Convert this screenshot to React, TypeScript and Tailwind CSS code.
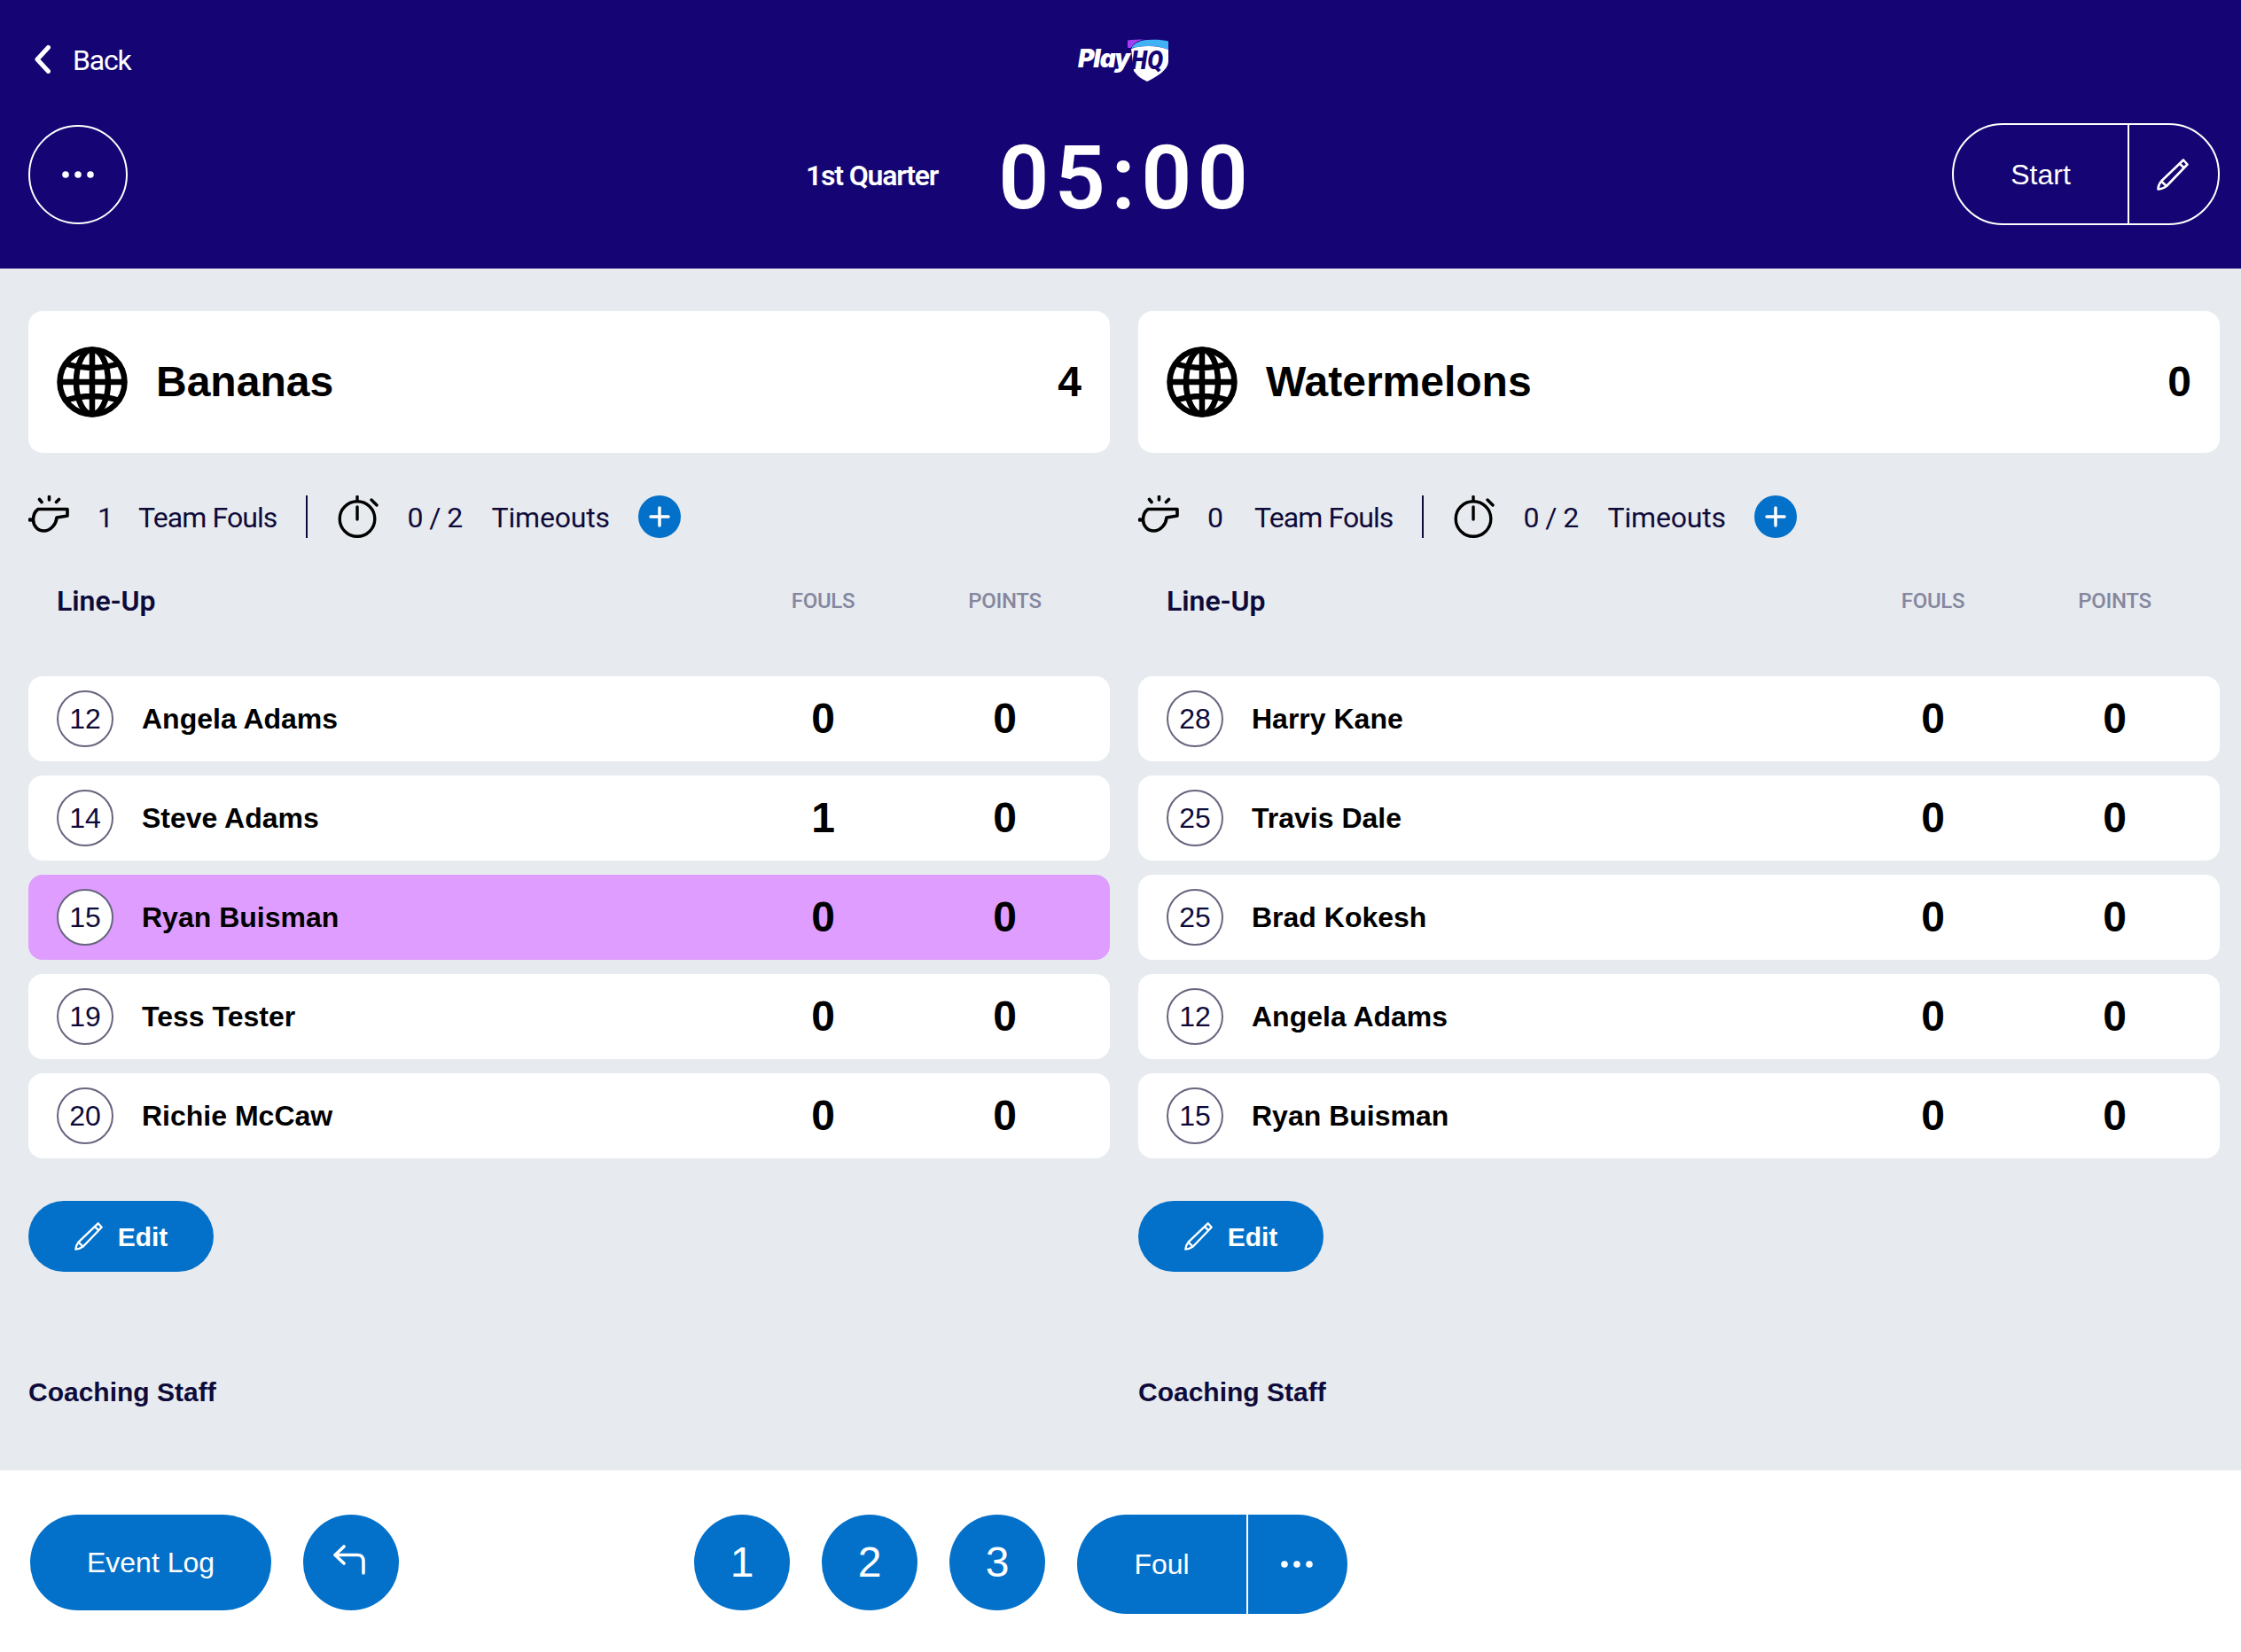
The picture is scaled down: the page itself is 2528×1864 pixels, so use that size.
const BLUE = "bg-[#0371c9]";

const bananas = [
  { no: 12, name: "Angela Adams", fouls: 0, points: 0 },
  { no: 14, name: "Steve Adams", fouls: 1, points: 0 },
  { no: 15, name: "Ryan Buisman", fouls: 0, points: 0, active: true },
  { no: 19, name: "Tess Tester", fouls: 0, points: 0 },
  { no: 20, name: "Richie McCaw", fouls: 0, points: 0 },
];

const watermelons = [
  { no: 28, name: "Harry Kane", fouls: 0, points: 0 },
  { no: 25, name: "Travis Dale", fouls: 0, points: 0 },
  { no: 25, name: "Brad Kokesh", fouls: 0, points: 0 },
  { no: 12, name: "Angela Adams", fouls: 0, points: 0 },
  { no: 15, name: "Ryan Buisman", fouls: 0, points: 0 },
];

const Pencil = ({ className }: { className: string }) => (
  <svg viewBox="0 0 36 36" fill="none" stroke="white" strokeWidth="2.6" strokeLinejoin="round" className={className}>
    <path d="M30 1.5L34.5 6.5L11 31C8 33 5 34.5 1.5 34.5C1.5 31 3 28 5 25.5Z" />
    <path d="M26 6L31 10.5M5 25.5L11 31" />
  </svg>
);

const Dots = () => (
  <svg viewBox="0 0 36 8" fill="white" className="w-9 h-2">
    <circle cx="4" cy="4" r="3.8" />
    <circle cx="18" cy="4" r="3.8" />
    <circle cx="32" cy="4" r="3.8" />
  </svg>
);

const Globe = () => (
  <svg viewBox="0 0 80 80" fill="none" stroke="black" strokeWidth="6.5" className="w-20 h-20 shrink-0">
    <circle cx="40" cy="40" r="36.5" />
    <ellipse cx="40" cy="40" rx="18" ry="36.5" />
    <path d="M40 2V78M2 40H78M9 19Q40 29 71 19M9 61Q40 51 71 61" />
  </svg>
);

const Whistle = () => (
  <svg viewBox="0 0 46 42" fill="none" stroke="black" strokeWidth="3.6" strokeLinecap="round" strokeLinejoin="round" className="w-[46px] h-[42px] shrink-0 -mt-1.5">
    <path d="M11 15.5H44V23L32 25C31.5 32 25.5 40 17.5 40C10.5 40 5.5 34 5.5 27.5C5.5 22.5 7.5 18 11 15.5Z" />
    <path d="M12.5 4.5L15 7.5M23.5 1.5V5M34.5 4.5L31.5 7.5" />
    <path d="M1.8 27.5H3" strokeWidth="4.5" />
  </svg>
);

const Stopwatch = () => (
  <svg viewBox="0 0 46 48" fill="none" stroke="black" strokeWidth="3.4" strokeLinecap="round" className="w-[46px] h-12 shrink-0">
    <circle cx="22" cy="26.5" r="19.8" />
    <path d="M22 1.5V6M22 13V27M38 5L44 11" />
  </svg>
);

const PlusButton = () => (
  <button className={`w-12 h-12 rounded-full ${BLUE} flex items-center justify-center shrink-0`}>
    <svg viewBox="0 0 24 24" fill="none" stroke="white" strokeWidth="3.5" strokeLinecap="round" className="w-6 h-6">
      <path d="M12 2V22M2 12H22" />
    </svg>
  </button>
);

const Logo = () => (
  <div className="flex items-start justify-center h-12 w-[110px]">
    <span className="font-[Inter] italic font-black text-[28px] leading-none text-white tracking-[-1px] mt-2 -mr-1">Play</span>
    <svg viewBox="0 0 50 50" className="w-[50px] h-[50px] shrink-0 -mt-px">
      <path d="M2 2.5C8 1.5 14 1.5 20 1.5C13 3 9 6 6 11L2 11Z" fill="#a33ff0" />
      <path d="M7 10C11 4.5 18 2 26 2C34 1.5 42 2 48 3.5V13C38 8.5 24 7.5 7 11Z" fill="#41b2f6" />
      <path d="M6 12C20 7.5 36 8.5 48 13V27C47 36 36 43 24 49C18 46 13 43 9 37Z" fill="white" />
      <text x="6" y="35" fontFamily="Roboto" fontStyle="italic" fontWeight="900" fontSize="29" textLength="36" lengthAdjust="spacingAndGlyphs" fill="#150473">HQ</text>
    </svg>
  </div>
);

const Header = () => (
  <header className="h-[303px] bg-[#150473] pl-8 pr-6 shrink-0 flex flex-col text-white">
    <div className="grid grid-cols-[1fr_auto_1fr] items-center h-12 mt-11">
      <div className="flex items-center pl-[7px]">
        <svg viewBox="0 0 18 32" fill="none" stroke="white" strokeWidth="5" strokeLinecap="round" strokeLinejoin="round" className="w-[18px] h-8 -mt-0.5">
          <path d="M15.5 2.5L3 16L15.5 29.5" />
        </svg>
        <span className="font-[Roboto] text-[32px] leading-none tracking-[-1.2px] ml-[25px]">Back</span>
      </div>
      <Logo />
      <div />
    </div>
    <div className="flex items-center mt-[47px]">
      <button className="w-28 h-28 rounded-full border-2 border-white flex items-center justify-center shrink-0">
        <Dots />
      </button>
      <div className="flex items-center ml-[765px]">
        <span className="font-[Roboto] font-semibold text-[32px] leading-none tracking-[-1.2px] mt-0.5">1st Quarter</span>
        <span className="font-[Roboto] font-semibold text-[100px] leading-none tracking-[6.5px] ml-[68px] mt-2">05:00</span>
      </div>
      <div className="ml-auto flex h-[115px] w-[302px] rounded-full border-2 border-white">
        <button className="w-[198px] border-r-2 border-white font-['Liberation_Sans'] text-[32px]">Start</button>
        <button className="flex-1 flex items-center justify-center pr-0.5">
          <Pencil className="w-9 h-9" />
        </button>
      </div>
    </div>
  </header>
);

type Player = { no: number; name: string; fouls: number; points: number; active?: boolean };

const PlayerRow = ({ player }: { player: Player }) => (
  <div className={`h-24 rounded-2xl flex items-center pl-8 pr-4 font-['Liberation_Sans'] text-black ${player.active ? "bg-[#df9dff]" : "bg-white"}`}>
    <div className="w-16 h-16 rounded-full border-2 border-[#66657f] flex items-center justify-center text-[32px] text-[#0e0b3a] bg-white shrink-0">
      {player.no}
    </div>
    <div className="ml-8 flex-1 font-bold text-[32px]">{player.name}</div>
    <div className="w-[205px] text-center font-bold text-[48px]">{player.fouls}</div>
    <div className="w-[205px] text-center font-bold text-[48px]">{player.points}</div>
  </div>
);

const TeamColumn = ({ name, score, fouls, players }: { name: string; score: number; fouls: number; players: Player[] }) => (
  <section className="flex flex-col">
    <div className="h-40 bg-white rounded-2xl flex items-center px-8 font-['Liberation_Sans'] font-bold text-[48px] text-black">
      <Globe />
      <h2 className="ml-8 flex-1">{name}</h2>
      <span>{score}</span>
    </div>

    <div className="flex items-center h-12 mt-12 font-[Roboto] text-[32px] text-[#0e0b3a] tracking-[-0.6px]">
      <Whistle />
      <span className={`ml-8 mt-0.5 ${fouls === 1 ? "w-[46px]" : "w-[53px]"}`}>{fouls}</span>
      <span className="mt-0.5 tracking-[-0.9px]">Team Fouls</span>
      <span className="ml-[33px] w-0.5 h-12 bg-[#0e0b3a]" />
      <span className="ml-[34px] flex"><Stopwatch /></span>
      <span className="ml-8 mt-0.5">0 / 2</span>
      <span className="ml-[33px] mt-0.5 tracking-[-0.2px]">Timeouts</span>
      <span className="ml-8 flex"><PlusButton /></span>
    </div>

    <div className="flex items-center h-12 mt-[47px] pl-8 pr-4">
      <span className="flex-1 font-[Roboto] font-semibold text-[32px] text-[#0e0b3a]">Line-Up</span>
      <span className="w-[205px] text-center font-[Roboto] font-medium text-2xl text-[#85879f] tracking-[-0.3px]">FOULS</span>
      <span className="w-[205px] text-center font-[Roboto] font-medium text-2xl text-[#85879f] tracking-[-0.3px]">POINTS</span>
    </div>

    <div className="flex flex-col gap-4 mt-[61px]">
      {players.map((p) => (
        <PlayerRow key={p.name} player={p} />
      ))}
    </div>

    <button className={`mt-12 h-20 w-[209px] rounded-full ${BLUE} flex items-center justify-center gap-[17px] text-white`}>
      <Pencil className="w-8 h-8" />
      <span className="font-['Liberation_Sans'] font-bold text-[30px]">Edit</span>
    </button>

    <div className="mt-[115px] h-10 flex items-center font-['Liberation_Sans'] font-bold text-[30px] text-[#0e0b3a]">Coaching Staff</div>
  </section>
);

const Footer = () => (
  <footer className="flex-1 bg-white flex items-start pt-[50px] pl-[34px] text-white">
    <button className={`w-[272px] h-[108px] rounded-full ${BLUE} font-['Liberation_Sans'] text-[32px]`}>Event Log</button>
    <button className={`ml-9 w-[108px] h-[108px] rounded-full ${BLUE} flex items-center justify-center`}>
      <svg viewBox="0 0 36 34" fill="none" stroke="white" strokeWidth="3.6" strokeLinecap="round" strokeLinejoin="round" className="w-9 h-[34px] -mt-1.5 -ml-1">
        <path d="M12 2L2 11.5L12 21M2 11.5H27C31.5 11.5 34 14 34 18.5V32" />
      </svg>
    </button>
    <div className="ml-[333px] flex gap-9">
      {[1, 2, 3].map((n) => (
        <button key={n} className={`w-[108px] h-[108px] rounded-full ${BLUE} font-['Liberation_Sans'] text-[48px]`}>{n}</button>
      ))}
    </div>
    <div className={`ml-9 flex h-28 w-[305px] rounded-full ${BLUE}`}>
      <button className="w-[193px] border-r-2 border-white font-['Liberation_Sans'] text-[32px]">Foul</button>
      <button className="flex-1 flex items-center justify-center pr-0.5">
        <Dots />
      </button>
    </div>
  </footer>
);

export default function App() {
  return (
    <div className="w-full h-[1864px] flex flex-col bg-[#e7eaef] overflow-hidden">
      <Header />
      <main className="h-[1356px] shrink-0 grid grid-cols-2 gap-8 pl-8 pr-6 pt-12">
        <TeamColumn name="Bananas" score={4} fouls={1} players={bananas} />
        <TeamColumn name="Watermelons" score={0} fouls={0} players={watermelons} />
      </main>
      <Footer />
    </div>
  );
}
